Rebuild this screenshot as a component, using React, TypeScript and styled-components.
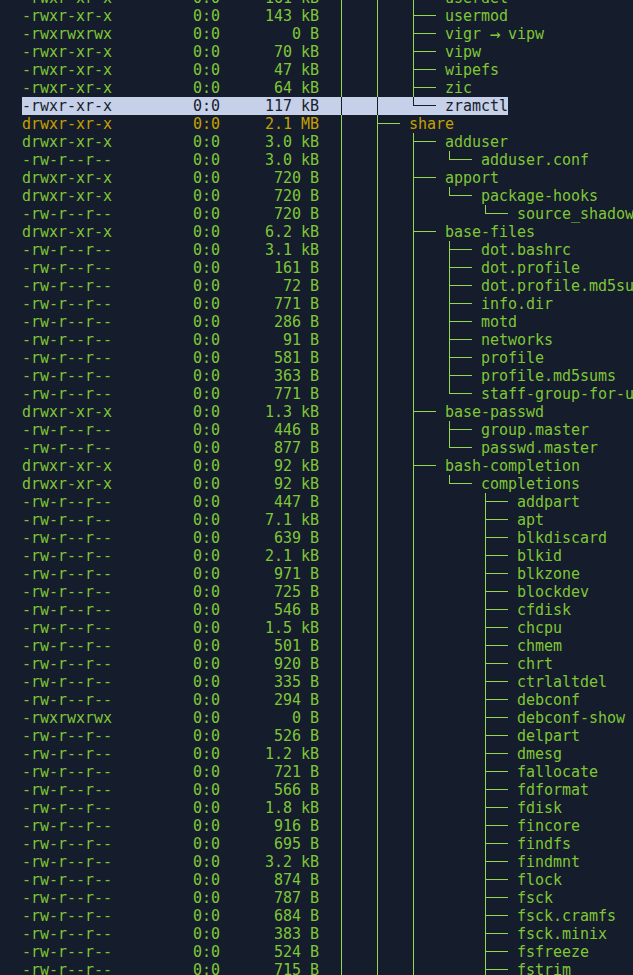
import React from "react";
import styled, { createGlobalStyle } from "styled-components";

const GlobalStyle = createGlobalStyle`
  html, body { margin: 0; padding: 0; background: #151c2b; }
  #root { width: 633px; height: 975px; }
`;

const Screen = styled.div`
  width: 633px;
  height: 975px;
  overflow: hidden;
  background: #151c2b;
  font-family: "DejaVu Sans Mono", "Liberation Mono", monospace;
  font-size: 15px;
  letter-spacing: -0.03px;
  white-space: pre;
`;

const List = styled.div`
  display: flex;
  flex-direction: column;
  margin-top: -11px;
  padding-left: 22px;
`;

type Variant = "normal" | "modified" | "selected";

const Row = styled.div<{ $variant: Variant }>`
  --line: ${(p) => (p.$variant === "selected" ? "#161d2c" : "#93d84e")};
  display: grid;
  grid-template-columns: 171px 27px 99px 18px max-content;
  width: max-content;
  height: 18px;
  line-height: 18px;
  color: ${(p) =>
    p.$variant === "selected" ? "#161d2c" : p.$variant === "modified" ? "#c4a000" : "#7fc737"};
  background: ${(p) => (p.$variant === "selected" ? "#c6d0e9" : "transparent")};
`;

const Cell = styled.span<{ $right?: boolean }>`
  text-align: ${(p) => (p.$right ? "right" : "left")};
`;

const Tree = styled.span`
  display: flex;
  height: 18px;
`;

const Indent = styled.span<{ $pipe: boolean }>`
  width: 36px;
  height: 18px;
  background: ${(p) =>
    p.$pipe ? "linear-gradient(var(--line), var(--line)) 4px 0 / 1px 100% no-repeat" : "none"};
`;

const Branch = styled.span<{ $last: boolean }>`
  width: 36px;
  height: 18px;
  background:
    linear-gradient(var(--line), var(--line)) 4px 0 / 1px ${(p) => (p.$last ? "9px" : "100%")} no-repeat,
    linear-gradient(var(--line), var(--line)) 4px 8px / 23px 1px no-repeat;
`;

const Name = styled.span`
  color: inherit;
`;

const Arrow = styled.span`
  display: inline-block;
  width: 18px;
  font-size: 18px;
  line-height: 18px;
  vertical-align: top;
`;

type Entry = [string, string, string, "T" | "L", string, Variant?, string?];

const P = "-rw-r--r--";
const X = "-rwxr-xr-x";
const D = "drwxr-xr-x";
const A = "-rwxrwxrwx";

const rows: Entry[] = [
  [X, "161 kB", "||", "T", "userdel"],
  [X, "143 kB", "||", "T", "usermod"],
  [A, "0 B", "||", "T", "vigr ", "normal", "vipw"],
  [X, "70 kB", "||", "T", "vipw"],
  [X, "47 kB", "||", "T", "wipefs"],
  [X, "64 kB", "||", "T", "zic"],
  [X, "117 kB", "||", "L", "zramctl", "selected"],
  [D, "2.1 MB", "|", "T", "share", "modified"],
  [D, "3.0 kB", "||", "T", "adduser"],
  [P, "3.0 kB", "|||", "L", "adduser.conf"],
  [D, "720 B", "||", "T", "apport"],
  [D, "720 B", "|||", "L", "package-hooks"],
  [P, "720 B", "||| ", "L", "source_shadow.py"],
  [D, "6.2 kB", "||", "T", "base-files"],
  [P, "3.1 kB", "|||", "T", "dot.bashrc"],
  [P, "161 B", "|||", "T", "dot.profile"],
  [P, "72 B", "|||", "T", "dot.profile.md5sums"],
  [P, "771 B", "|||", "T", "info.dir"],
  [P, "286 B", "|||", "T", "motd"],
  [P, "91 B", "|||", "T", "networks"],
  [P, "581 B", "|||", "T", "profile"],
  [P, "363 B", "|||", "T", "profile.md5sums"],
  [P, "771 B", "|||", "L", "staff-group-for-usr-local"],
  [D, "1.3 kB", "||", "T", "base-passwd"],
  [P, "446 B", "|||", "T", "group.master"],
  [P, "877 B", "|||", "L", "passwd.master"],
  [D, "92 kB", "||", "T", "bash-completion"],
  [D, "92 kB", "|||", "L", "completions"],
  [P, "447 B", "||| ", "T", "addpart"],
  [P, "7.1 kB", "||| ", "T", "apt"],
  [P, "639 B", "||| ", "T", "blkdiscard"],
  [P, "2.1 kB", "||| ", "T", "blkid"],
  [P, "971 B", "||| ", "T", "blkzone"],
  [P, "725 B", "||| ", "T", "blockdev"],
  [P, "546 B", "||| ", "T", "cfdisk"],
  [P, "1.5 kB", "||| ", "T", "chcpu"],
  [P, "501 B", "||| ", "T", "chmem"],
  [P, "920 B", "||| ", "T", "chrt"],
  [P, "335 B", "||| ", "T", "ctrlaltdel"],
  [P, "294 B", "||| ", "T", "debconf"],
  [A, "0 B", "||| ", "T", "debconf-show"],
  [P, "526 B", "||| ", "T", "delpart"],
  [P, "1.2 kB", "||| ", "T", "dmesg"],
  [P, "721 B", "||| ", "T", "fallocate"],
  [P, "566 B", "||| ", "T", "fdformat"],
  [P, "1.8 kB", "||| ", "T", "fdisk"],
  [P, "916 B", "||| ", "T", "fincore"],
  [P, "695 B", "||| ", "T", "findfs"],
  [P, "3.2 kB", "||| ", "T", "findmnt"],
  [P, "874 B", "||| ", "T", "flock"],
  [P, "787 B", "||| ", "T", "fsck"],
  [P, "684 B", "||| ", "T", "fsck.cramfs"],
  [P, "383 B", "||| ", "T", "fsck.minix"],
  [P, "524 B", "||| ", "T", "fsfreeze"],
  [P, "715 B", "||| ", "T", "fstrim"],
];

export default function App() {
  return (
    <>
      <GlobalStyle />
      <Screen>
        <List>
          {rows.map(([perm, size, guides, branch, name, variant = "normal", target], i) => (
            <Row key={i} $variant={variant}>
              <Cell>{perm}</Cell>
              <Cell>0:0</Cell>
              <Cell $right>{size}</Cell>
              <Cell />
              <Tree>
                {guides.split("").map((g, j) => (
                  <Indent key={j} $pipe={g === "|"} />
                ))}
                <Branch $last={branch === "L"} />
                <Name>
                  {name}
                  {target && (
                    <>
                      <Arrow>→</Arrow>
                      {target}
                    </>
                  )}
                </Name>
              </Tree>
            </Row>
          ))}
        </List>
      </Screen>
    </>
  );
}
